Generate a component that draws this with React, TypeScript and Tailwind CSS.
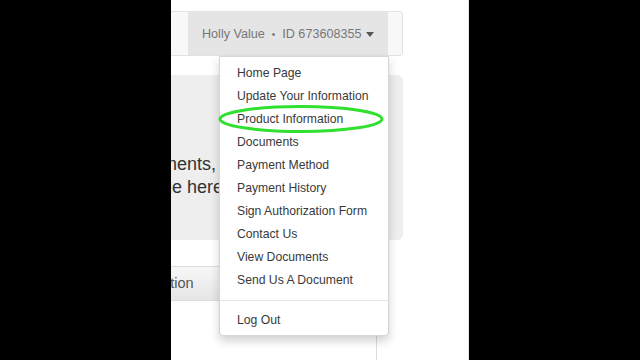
import React from "react";

const menuItems = [
  "Home Page",
  "Update Your Information",
  "Product Information",
  "Documents",
  "Payment Method",
  "Payment History",
  "Sign Authorization Form",
  "Contact Us",
  "View Documents",
  "Send Us A Document",
];

const App = () => {
  return (
    <div
      className="w-[640px] h-[360px] bg-black flex flex-row"
      style={{ fontFamily: '"Liberation Sans", Arial, sans-serif' }}
    >
      {/* visible page column */}
      <div className="ml-[171px] w-[298px] h-[360px] bg-white relative overflow-hidden border-r border-[#e4e4e4]">
        {/* navbar */}
        <div className="mt-[11px] w-[232px] h-[45px] flex flex-row bg-[#f8f8f8] border border-l-0 border-[#e2e2e2] rounded-r-[4px]">
          <div className="w-[17px]" />
          <div className="w-[200px] h-full bg-[#e5e5e5] flex flex-row items-center pl-[14px] pt-[1px] text-[12.6px] text-[#777]">
            <span>Holly Value</span>
            <span className="mx-[7px] text-[10px]">•</span>
            <span>ID 673608355</span>
            <span className="ml-[5px] w-0 h-0 border-x-[4.5px] border-x-transparent border-t-[5px] border-t-[#555]" />
          </div>
        </div>

        {/* jumbotron */}
        <div className="mt-[19px] w-[232px] h-[165px] bg-[#eeeeee] rounded-r-[6px] flex flex-col justify-start pt-[78px] text-[18px] leading-[23px] text-[#333] whitespace-nowrap">
          <div className="-ml-[38px]">payments,</div>
          <div className="-ml-[37px]">online here.</div>
        </div>

        {/* tab bar */}
        <div className="mt-[26px] w-[206px] h-[35px] border-y border-r border-[#dcdcdc] bg-gradient-to-b from-[#f7f7f7] to-[#e6e6e6] flex items-center text-[14.5px] text-[#555] whitespace-nowrap">
          <span className="-ml-[50px]">Information</span>
        </div>
        <div className="w-[206px] h-[80px] border-r border-[#dcdcdc]" />

        {/* dropdown menu */}
        <div className="absolute left-[48px] top-[56px] w-[170px] h-[280px] bg-white border border-[#d6d6d6] rounded-b-[4px] shadow-[0_5px_10px_rgba(0,0,0,0.18)] pt-[5px] text-[12.2px] text-[#3a3a3a]">
          {menuItems.map((item) => (
            <div key={item} className="h-[23px] leading-[23px] pl-[17px] whitespace-nowrap">
              {item}
            </div>
          ))}
          <div className="mt-[8px] mb-[8px] h-px bg-[#e5e5e5]" />
          <div className="h-[23px] leading-[23px] pl-[17px]">Log Out</div>
        </div>

        {/* green highlight around Product Information */}
        <svg
          className="absolute left-[47px] top-[103px]"
          width="168"
          height="32"
          viewBox="0 0 168 32"
        >
          <ellipse
            cx="83"
            cy="16"
            rx="81"
            ry="12.5"
            fill="none"
            stroke="#2fe02f"
            strokeWidth="3"
          />
        </svg>
      </div>
    </div>
  );
};

export default App;
